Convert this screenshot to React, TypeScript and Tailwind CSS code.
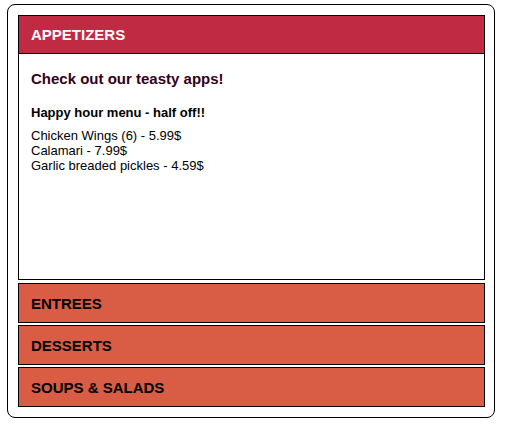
import React from "react";

const sections = ["ENTREES", "DESSERTS", "SOUPS & SALADS"];

export default function App() {
  return (
    <div
      className="bg-white w-[508px] h-[427px] pt-[4px] pl-[7px]"
      style={{ fontFamily: '"Liberation Sans", Arial, sans-serif' }}
    >
      <div className="w-[488px] h-[414px] border border-black rounded-[8px] pt-[10px] pl-[10px] pr-[9px] flex flex-col">
        <div className="border border-black flex flex-col">
          <div className="h-[38px] bg-[#c02a43] border-b border-black flex items-center pl-[12px]">
            <span className="text-white font-bold text-[15px] leading-[17px]">APPETIZERS</span>
          </div>
          <div className="h-[225px] bg-white pl-[12px] pt-[16px]">
            <h3 className="text-[15px] leading-[17px] font-bold text-[#33001a]">
              Check out our teasty apps!
            </h3>
            <p className="mt-[18px] text-[13px] leading-[15px] font-bold text-black">
              Happy hour menu - half off!!
            </p>
            <div className="mt-[8px] text-[13px] leading-[15px] text-black">
              <div>Chicken Wings (6) - 5.99$</div>
              <div>Calamari - 7.99$</div>
              <div>Garlic breaded pickles - 4.59$</div>
            </div>
          </div>
        </div>
        {sections.map((s, i) => (
          <div
            key={s}
            className={`${i === 0 ? "mt-[3px]" : "mt-[2px]"} h-[40px] border border-black bg-[#d85d44] flex items-center pl-[12px]`}
          >
            <span className="text-black font-bold text-[15px] leading-[17px]">{s}</span>
          </div>
        ))}
      </div>
    </div>
  );
}
